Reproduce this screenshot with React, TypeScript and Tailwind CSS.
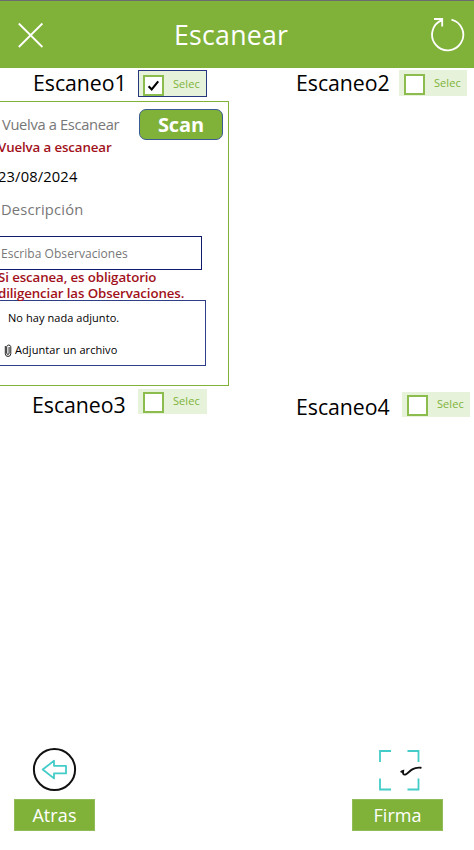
import React from "react";

function Selec({ className, boxClass, textClass = "", checked = false }: { className: string; boxClass: string; textClass?: string; checked?: boolean }) {
  return (
    <div className={`flex shrink-0 items-start bg-[#e6f2d9] text-[#7fb239] ${className}`}>
      <div className={`h-[21px] w-[21px] shrink-0 border-2 border-[#8cbc4d] bg-white ${boxClass}`}>
        {checked && (
          <svg viewBox="0 0 17 17" className="h-[17px] w-[17px]" fill="none">
            <path d="M3.6 9.2l3.1 3.3 6.5-8.2" stroke="#000" strokeWidth="2.1" />
          </svg>
        )}
      </div>
      <span className={`ml-[9px] text-[11px] leading-[15px] tracking-[0.06px] ${textClass}`}>Selec</span>
    </div>
  );
}

function Heading({ children, className }: { children: string; className: string }) {
  return <h2 className={`shrink-0 whitespace-nowrap text-[21.3px] leading-[30px] tracking-[-0.05px] ${className}`}>{children}</h2>;
}

export default function App() {
  return (
    <div className="flex h-[850px] w-[474px] flex-col overflow-hidden bg-white font-['Open_Sans','Noto_Sans',sans-serif] text-black">
      <header className="flex h-[68px] shrink-0 items-start border-t border-[#6d6b70] bg-[#80b23a] text-white">
        <svg className="ml-[18px] mt-[21px] h-[26px] w-[26px]" viewBox="0 0 26 26" fill="none" stroke="white" strokeWidth="1.8">
          <path d="M.8 1.5L24.4 25M24.4 1.5L.8 25" />
        </svg>
        <h1 className="ml-[130px] mt-[14px] text-[26.7px] leading-[40px] tracking-[0.25px]">Escanear</h1>
        <svg className="ml-auto mr-[9px] mt-[16px] h-[36px] w-[36px]" viewBox="0 0 36 36" fill="none" stroke="white" strokeWidth="1.8">
          <path d="M22.5 2.6A15.6 15.6 0 1 1 13 3.2M5 2h8.2v7.5" />
        </svg>
      </header>

      <section className="flex h-[33px] shrink-0 items-start">
        <Heading className="ml-[33px] w-[105px]">Escaneo1</Heading>
        <Selec checked className="mt-[2px] h-[27px] w-[69px] border border-[#26367f]" boxClass="ml-[4px] mt-[4px]" textClass="mt-[5px]" />
        <Heading className="ml-[89px] w-[103px]">Escaneo2</Heading>
        <Selec className="mt-[2px] h-[26px] w-[68px]" boxClass="ml-[5px] mt-[4px]" textClass="mt-[5px]" />
      </section>

      <section className="h-[285px] w-[229px] shrink-0 border-y border-r border-[#80b23a]">
        <div className="flex h-[36px] items-start justify-between">
          <span className="ml-[2px] mt-[12px] whitespace-nowrap text-[14.7px] leading-[20px] tracking-[-0.33px] text-[#777]">Vuelva a Escanear</span>
          <button className="mr-[5px] mt-[7px] flex h-[31px] w-[84px] items-center justify-center rounded-[7px] border border-[#385c91] bg-[#80b23a] text-[20px] font-bold leading-none tracking-[-0.1px] text-white">Scan</button>
        </div>
        <p className="-ml-[2px] text-[13.3px] font-semibold leading-[18px] tracking-[-0.12px] text-[#a2111b]">Vuelva a escanear</p>
        <p className="-ml-[2px] mt-[9px] text-[14.7px] leading-[22px] tracking-[0.15px]">23/08/2024</p>
        <p className="ml-[1px] mt-[11px] text-[14.7px] leading-[22px] tracking-[0.2px] text-[#777]">Descripción</p>
        <div className="-ml-px mt-[16px] flex h-[34px] w-[203px] items-center border border-[#101b70] pl-[1px] pt-[2px] text-[12px] tracking-[0.05px] text-[#777]">Escriba Observaciones</div>
        <p className="-mt-px -ml-[2px] h-[31px] whitespace-nowrap text-[13.3px] font-semibold leading-[16px] tracking-[-0.11px] text-[#a2111b]">Si escanea, es obligatorio<br />diligenciar las Observaciones.</p>
        <div className="-ml-px h-[66px] w-[207px] border border-[#303d87] text-[11px] tracking-[0.06px]">
          <p className="ml-[8px] mt-[9px] leading-[16px]">No hay nada adjunto.</p>
          <p className="ml-[4px] mt-[16px] flex items-center leading-[16px]">
            <svg className="mr-[3px] h-[13px] w-[8px]" viewBox="0 0 8 13" fill="none" stroke="#222">
              <path d="M1.3 2v7.7a2.7 2.7 0 0 0 5.5 0V2.7a2.1 2.1 0 0 0-4.1 0v6.5a1.2 1.2 0 0 0 2.4 0V3" />
            </svg>
            Adjuntar un archivo
          </p>
        </div>
      </section>

      <section className="flex h-[34px] shrink-0 items-start">
        <Heading className="ml-[32px] mt-[4px] w-[106px]">Escaneo3</Heading>
        <Selec className="mt-[3px] h-[25px] w-[69px]" boxClass="ml-[5px] mt-[3px]" textClass="mt-[4px]" />
        <Heading className="ml-[89px] mt-[6px] w-[106px]">Escaneo4</Heading>
        <Selec className="mt-[6px] h-[25px] w-[68px]" boxClass="ml-[5px] mt-[3px]" textClass="mt-[4px]" />
      </section>

      <footer className="mt-auto flex h-[104px] shrink-0 items-start justify-between pl-[14px] pr-[31px]">
        <div className="flex w-[81px] flex-col items-center">
          <svg className="mt-[1px] h-[46px] w-[46px]" viewBox="0 0 46 46" fill="none">
            <circle cx="22.5" cy="22.5" r="20.6" stroke="#111" strokeWidth="2" />
            <path d="M10.7 22.5L22 13.8v5h12v7.6H22v5z" stroke="#44ccc8" strokeWidth="1.8" strokeLinejoin="round" />
          </svg>
          <button className="mt-[6px] h-[32px] w-[81px] border border-[#91bc57] bg-[#80b23a] text-[18px] leading-[30px] tracking-[0.1px] text-white">Atras</button>
        </div>
        <div className="flex w-[91px] flex-col">
          <svg className="ml-[26px] mt-[1px] h-[46px] w-[46px]" viewBox="0 0 46 46" fill="none">
            <path d="M13 4H2v11M29.5 4h11v11M40.5 31.5v11h-11M13 42.5H2v-11" stroke="#44ccc8" strokeWidth="1.8" />
            <path d="M23.3 24.7l1.8-.7c-.5 2.6.3 4.4 2.7 3.3 2.3-1.1 3.8-3.5 6.5-5 2.6-1.5 5.4-1.9 8.4-1.6" stroke="#111" strokeWidth="1.9" strokeLinecap="round" />
            <circle cx="24.8" cy="24.7" r="1.3" fill="#111" />
          </svg>
          <button className="mt-[6px] h-[32px] w-[91px] border border-[#91bc57] bg-[#80b23a] text-[18px] leading-[30px] text-white">Firma</button>
        </div>
      </footer>
    </div>
  );
}
